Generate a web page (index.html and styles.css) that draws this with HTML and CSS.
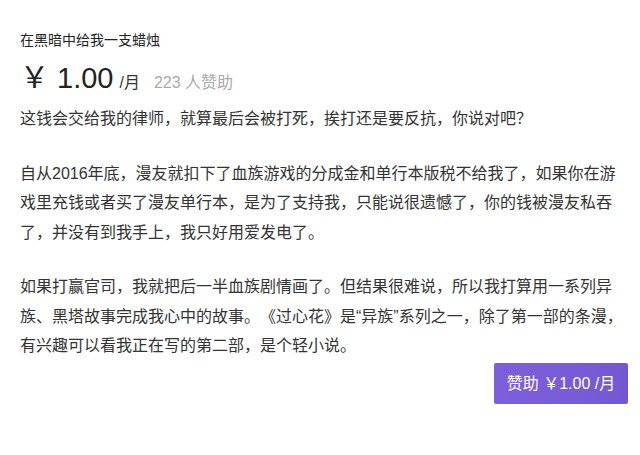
FILE: index.html
```html
<!DOCTYPE html>
<html lang="zh">
<head>
	<meta charset="UTF-8">
	<title>赞助</title>
	<link rel="stylesheet" href="styles.css">
</head>
<body>
	<div class="sponsor">
		<!-- 标题 -->
		<div class="title">在黑暗中给我一支蜡烛</div>
		<!-- 价格 -->
		<div class="price">
			<span class="amount">￥ 1.00</span>
			<span class="unit">/月</span>
			<span class="count">223 人赞助</span>
		</div>
		<!-- 说明文字 -->
		<div class="desc">
			<p>这钱会交给我的律师，就算最后会被打死，挨打还是要反抗，你说对吧？</p>
			<p>自从2016年底，漫友就扣下了血族游戏的分成金和单行本版税不给我了，如果你在游戏里充钱或者买了漫友单行本，是为了支持我，只能说很遗憾了，你的钱被漫友私吞了，并没有到我手上，我只好用爱发电了。</p>
			<p>如果打赢官司，我就把后一半血族剧情画了。但结果很难说，所以我打算用一系列异族、黑塔故事完成我心中的故事。《过心花》是“异族”系列之一，除了第一部的条漫，有兴趣可以看我正在写的第二部，是个轻小说。</p>
		</div>
		<div class="action">
			<a class="btn" href="##">赞助 ￥1.00 /月</a>
		</div>
	</div>
</body>
</html>
```

FILE: styles.css
```css
*{
	margin: 0;
	padding: 0;
}
body{
	font: normal 16px "Liberation Sans", "Noto Sans CJK SC", sans-serif;
	color: #333;
	background: #fff;
	/*标点不挤压*/
	text-spacing-trim: space-all;
}
a{
	text-decoration: none;
}
.sponsor{
	width: 611px;
	padding: 30px 9px 0 20px;
}
/*标题*/
.title{
	font-size: 14px;
	line-height: 20px;
	color: #222;
}
/*价格行*/
.price{
	display: flex;
	align-items: baseline;
	margin-top: 8px;
	height: 40px;
	line-height: 40px;
}
.amount{
	font-size: 29px;
	color: #222;
}
.unit{
	font-size: 16px;
	margin-left: 6px;
	color: #333;
}
.count{
	font-size: 16px;
	color: #aaa;
	margin-left: 14px;
}
/*正文*/
.desc{
	margin-top: 6px;
}
.desc p{
	line-height: 29.5px;
	margin-bottom: 25px;
}
/*按钮*/
.action{
	display: flex;
	justify-content: flex-end;
	margin-top: -23px;
	padding-right: 3px;
}
.btn{
	display: block;
	width: 134px;
	height: 41px;
	line-height: 41px;
	text-align: center;
	color: #fff;
	font-size: 16px;
	background: linear-gradient(90deg, #7e5fdb, #7458d3);
	border-radius: 2px;
}
```
